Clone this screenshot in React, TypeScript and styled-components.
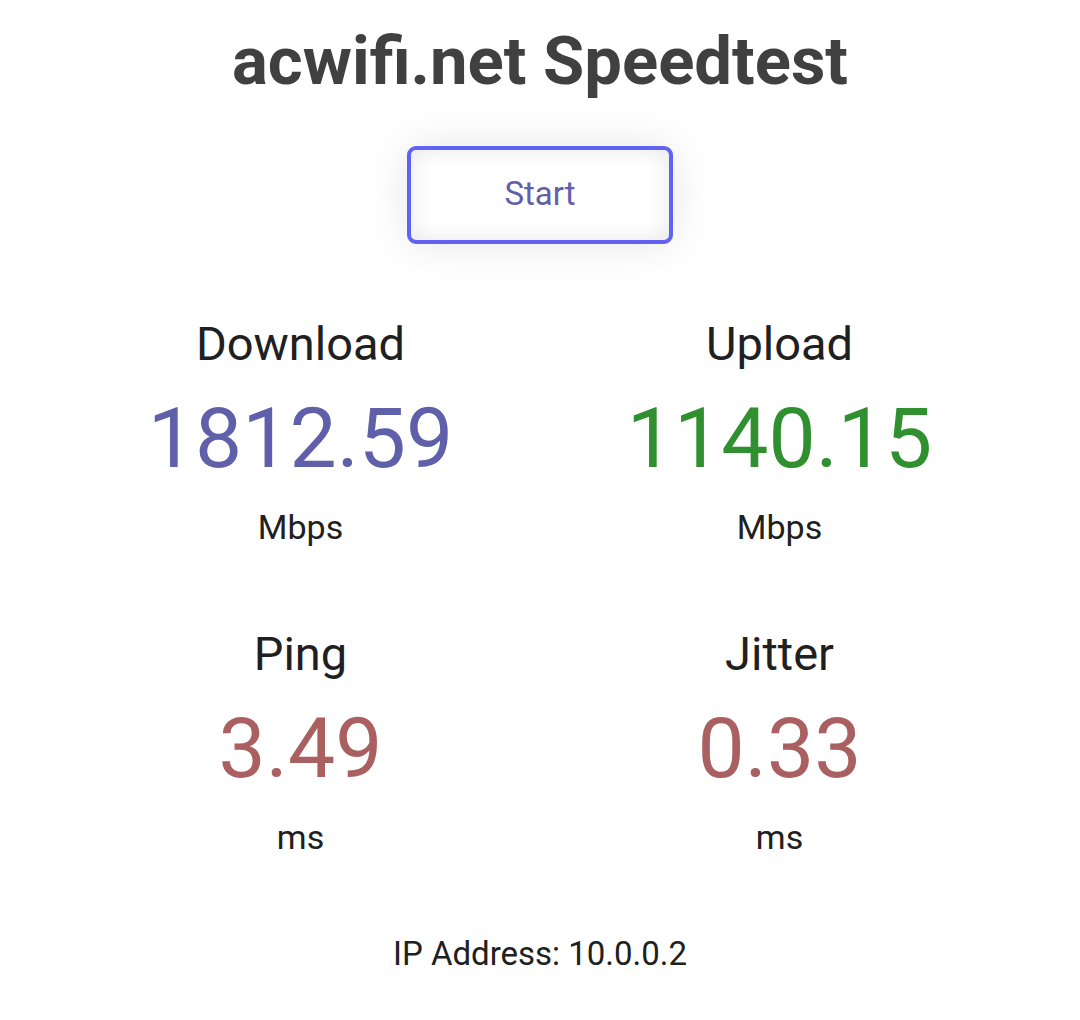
import React from 'react';
import styled, { createGlobalStyle } from 'styled-components';

const GlobalStyle = createGlobalStyle`
  html, body {
    margin: 0;
    padding: 0;
    background: #ffffff;
  }
  body {
    font-family: Roboto, "Noto Sans", sans-serif;
    color: #202020;
  }
`;

const Page = styled.div`
  display: flex;
  flex-direction: column;
  align-items: center;
  width: 1080px;
  min-height: 1020px;
`;

const Title = styled.h1`
  margin: 21px 0 0;
  font-size: 67px;
  font-weight: 700;
  line-height: 80px;
  color: #404040;
`;

const StartButton = styled.button`
  margin-top: 45px;
  width: 266px;
  height: 98px;
  padding: 0 0 3px;
  border: 4px solid #6262f2;
  border-radius: 9px;
  background: #ffffff;
  box-shadow: 0 0 44px rgba(0, 0, 0, 0.1), inset 0 0 22px rgba(0, 0, 0, 0.1);
  font-family: Roboto, sans-serif;
  font-size: 33px;
  color: #6060aa;
  cursor: pointer;
`;

const Grid = styled.div`
  display: grid;
  grid-template-columns: 479px 479px;
  row-gap: 79px;
  margin-top: 72px;
`;

const Meter = styled.div`
  display: flex;
  flex-direction: column;
  align-items: center;
`;

const Label = styled.div`
  font-size: 47px;
  line-height: 56px;
  color: #202020;
`;

const Value = styled.div<{ $color: string }>`
  margin-top: 17px;
  font-size: 84px;
  line-height: 100px;
  color: ${({ $color }) => $color};
`;

const Unit = styled.div`
  margin-top: 18px;
  font-size: 34px;
  line-height: 40px;
  color: #202020;
`;

const Address = styled.div`
  margin-top: 77px;
  font-size: 33px;
  line-height: 40px;
  color: #202020;
`;

type MeterData = { label: string; value: string; unit: string; color: string };

const meters: MeterData[] = [
  { label: 'Download', value: '1812.59', unit: 'Mbps', color: '#6060aa' },
  { label: 'Upload', value: '1140.15', unit: 'Mbps', color: '#309030' },
  { label: 'Ping', value: '3.49', unit: 'ms', color: '#aa6060' },
  { label: 'Jitter', value: '0.33', unit: 'ms', color: '#aa6060' },
];

const App: React.FC = () => (
  <Page>
    <GlobalStyle />
    <Title>acwifi.net Speedtest</Title>
    <StartButton type="button">Start</StartButton>
    <Grid>
      {meters.map((m) => (
        <Meter key={m.label}>
          <Label>{m.label}</Label>
          <Value $color={m.color}>{m.value}</Value>
          <Unit>{m.unit}</Unit>
        </Meter>
      ))}
    </Grid>
    <Address>IP Address: 10.0.0.2</Address>
  </Page>
);

export default App;
